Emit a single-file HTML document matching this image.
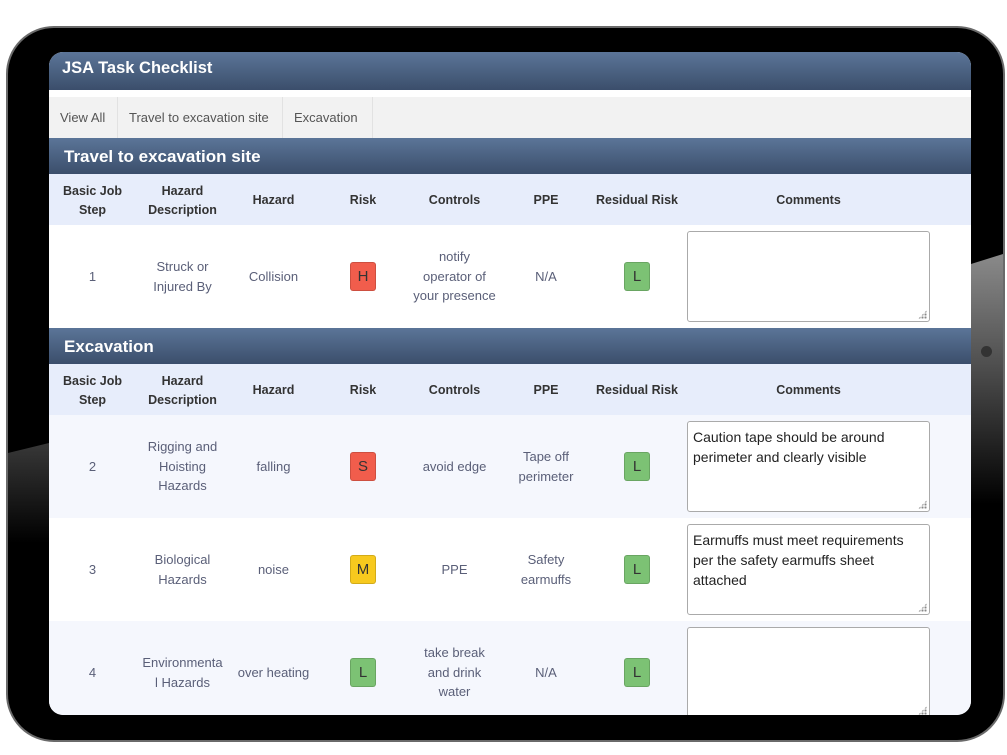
<!DOCTYPE html>
<html><head><meta charset="utf-8"><style>
*{margin:0;padding:0;box-sizing:border-box}
body{width:1007px;height:755px;background:#fff;position:relative;overflow:hidden;font-family:"Liberation Sans",Arial,sans-serif}
.dev{position:absolute;left:6px;top:26px;width:999px;height:716px;border-radius:48px;background:#000;border:2px solid #6a6a6a}
.refl{position:absolute;left:971px;top:254px;width:32px;height:250px;background:linear-gradient(#8a8a8a,#555 40%,#000);clip-path:polygon(0 4%,100% 0,100% 100%,0 100%)}
.refl2{position:absolute;left:8px;top:443px;width:41px;height:100px;background:linear-gradient(#383838,#000);clip-path:polygon(0 10%,100% 0,100% 100%,0 100%)}
.cam{position:absolute;left:981px;top:346px;width:11px;height:11px;border-radius:50%;background:#333;z-index:2}
.scr{position:absolute;left:49px;top:52px;width:922px;height:663px;background:#fff;border-radius:14px;overflow:hidden}
.bar{background:linear-gradient(#5b7598,#3b4e6b);color:#fff;font-weight:bold;position:absolute;left:0;width:922px}
.tabs{position:absolute;top:45px;left:0;width:922px;height:41px;background:#f2f2f2;font-size:13px;color:#555}
.tabs span{position:absolute;top:0;height:41px;line-height:41px;border-right:1px solid #e2e2e2;padding:0 11px}
.hd{position:absolute;left:0;width:922px;height:51px;background:#e7edfb;font-size:12.5px;font-weight:bold;color:#333}
.row{position:absolute;left:0;width:922px;font-size:13px;color:#5a5f78}
.c{position:absolute;top:0;height:100%;display:flex;align-items:center;justify-content:center;text-align:center;line-height:19.5px}
.hd .c{padding-top:3px}
.b{width:26px;height:29px;border-radius:3px;display:flex;align-items:center;justify-content:center;color:#333;font-size:15px;border:1px solid rgba(0,0,0,.15)}
.r{background:#f15d4c}.g{background:#7cc274}.y{background:#f7c91e}
.ta{position:absolute;left:638px;width:243px;height:91px;border:1px solid #aaa;border-radius:3px;background:#fff;font-size:14px;color:#222;padding:5px 5px;line-height:20px}
.ta:after{content:"";position:absolute;right:2px;bottom:2px;width:9px;height:9px;background:radial-gradient(circle,#888 1px,transparent 1.2px) 0 0/3px 3px;clip-path:polygon(100% 0,100% 100%,0 100%)}
</style></head><body>
<div class="dev"></div><div class="refl"></div><div class="refl2"></div><div class="cam"></div>
<div class="scr">
<div class="bar" style="top:0;height:38px;font-size:16.5px;line-height:32px;padding-left:13px">JSA Task Checklist</div>
<div class="tabs"><span style="left:0;width:69px">View All</span><span style="left:69px;width:165px">Travel to excavation site</span><span style="left:234px;width:90px">Excavation</span></div>
<div class="bar" style="top:86px;height:36px;font-size:17px;line-height:38px;padding-left:15px">Travel to excavation site</div>
<div class="hd" style="top:122px">
<div class="c" style="left:0;width:87px">Basic Job<br>Step</div><div class="c" style="left:87px;width:93px">Hazard<br>Description</div><div class="c" style="left:180px;width:89px">Hazard</div><div class="c" style="left:269px;width:90px">Risk</div><div class="c" style="left:359px;width:93px">Controls</div><div class="c" style="left:452px;width:90px">PPE</div><div class="c" style="left:542px;width:92px">Residual Risk</div><div class="c" style="left:634px;width:251px">Comments</div></div>
<div class="row" style="top:173px;height:103px;background:#fff">
<div class="c" style="left:0;width:87px">1</div><div class="c" style="left:87px;width:93px">Struck or<br>Injured By</div><div class="c" style="left:180px;width:89px">Collision</div><div class="c" style="left:269px;width:90px"><div class="b r">H</div></div><div class="c" style="left:359px;width:93px">notify<br>operator of<br>your presence</div><div class="c" style="left:452px;width:90px">N/A</div><div class="c" style="left:542px;width:92px"><div class="b g">L</div></div><div class="ta" style="top:6px"></div></div>
<div class="bar" style="top:276px;height:36px;font-size:17px;line-height:38px;padding-left:15px">Excavation</div>
<div class="hd" style="top:312px">
<div class="c" style="left:0;width:87px">Basic Job<br>Step</div><div class="c" style="left:87px;width:93px">Hazard<br>Description</div><div class="c" style="left:180px;width:89px">Hazard</div><div class="c" style="left:269px;width:90px">Risk</div><div class="c" style="left:359px;width:93px">Controls</div><div class="c" style="left:452px;width:90px">PPE</div><div class="c" style="left:542px;width:92px">Residual Risk</div><div class="c" style="left:634px;width:251px">Comments</div></div>
<div class="row" style="top:363px;height:103px;background:#f5f7fd">
<div class="c" style="left:0;width:87px">2</div><div class="c" style="left:87px;width:93px">Rigging and<br>Hoisting<br>Hazards</div><div class="c" style="left:180px;width:89px">falling</div><div class="c" style="left:269px;width:90px"><div class="b r">S</div></div><div class="c" style="left:359px;width:93px">avoid edge</div><div class="c" style="left:452px;width:90px">Tape off<br>perimeter</div><div class="c" style="left:542px;width:92px"><div class="b g">L</div></div><div class="ta" style="top:6px">Caution tape should be around perimeter and clearly visible</div></div>
<div class="row" style="top:466px;height:103px;background:#fff">
<div class="c" style="left:0;width:87px">3</div><div class="c" style="left:87px;width:93px">Biological<br>Hazards</div><div class="c" style="left:180px;width:89px">noise</div><div class="c" style="left:269px;width:90px"><div class="b y">M</div></div><div class="c" style="left:359px;width:93px">PPE</div><div class="c" style="left:452px;width:90px">Safety<br>earmuffs</div><div class="c" style="left:542px;width:92px"><div class="b g">L</div></div><div class="ta" style="top:6px">Earmuffs must meet requirements per the safety earmuffs sheet attached</div></div>
<div class="row" style="top:569px;height:103px;background:#f5f7fd">
<div class="c" style="left:0;width:87px">4</div><div class="c" style="left:87px;width:93px">Environmenta<br>l Hazards</div><div class="c" style="left:180px;width:89px">over heating</div><div class="c" style="left:269px;width:90px"><div class="b g">L</div></div><div class="c" style="left:359px;width:93px">take break<br>and drink<br>water</div><div class="c" style="left:452px;width:90px">N/A</div><div class="c" style="left:542px;width:92px"><div class="b g">L</div></div><div class="ta" style="top:6px"></div></div>
</div>
</body></html>
